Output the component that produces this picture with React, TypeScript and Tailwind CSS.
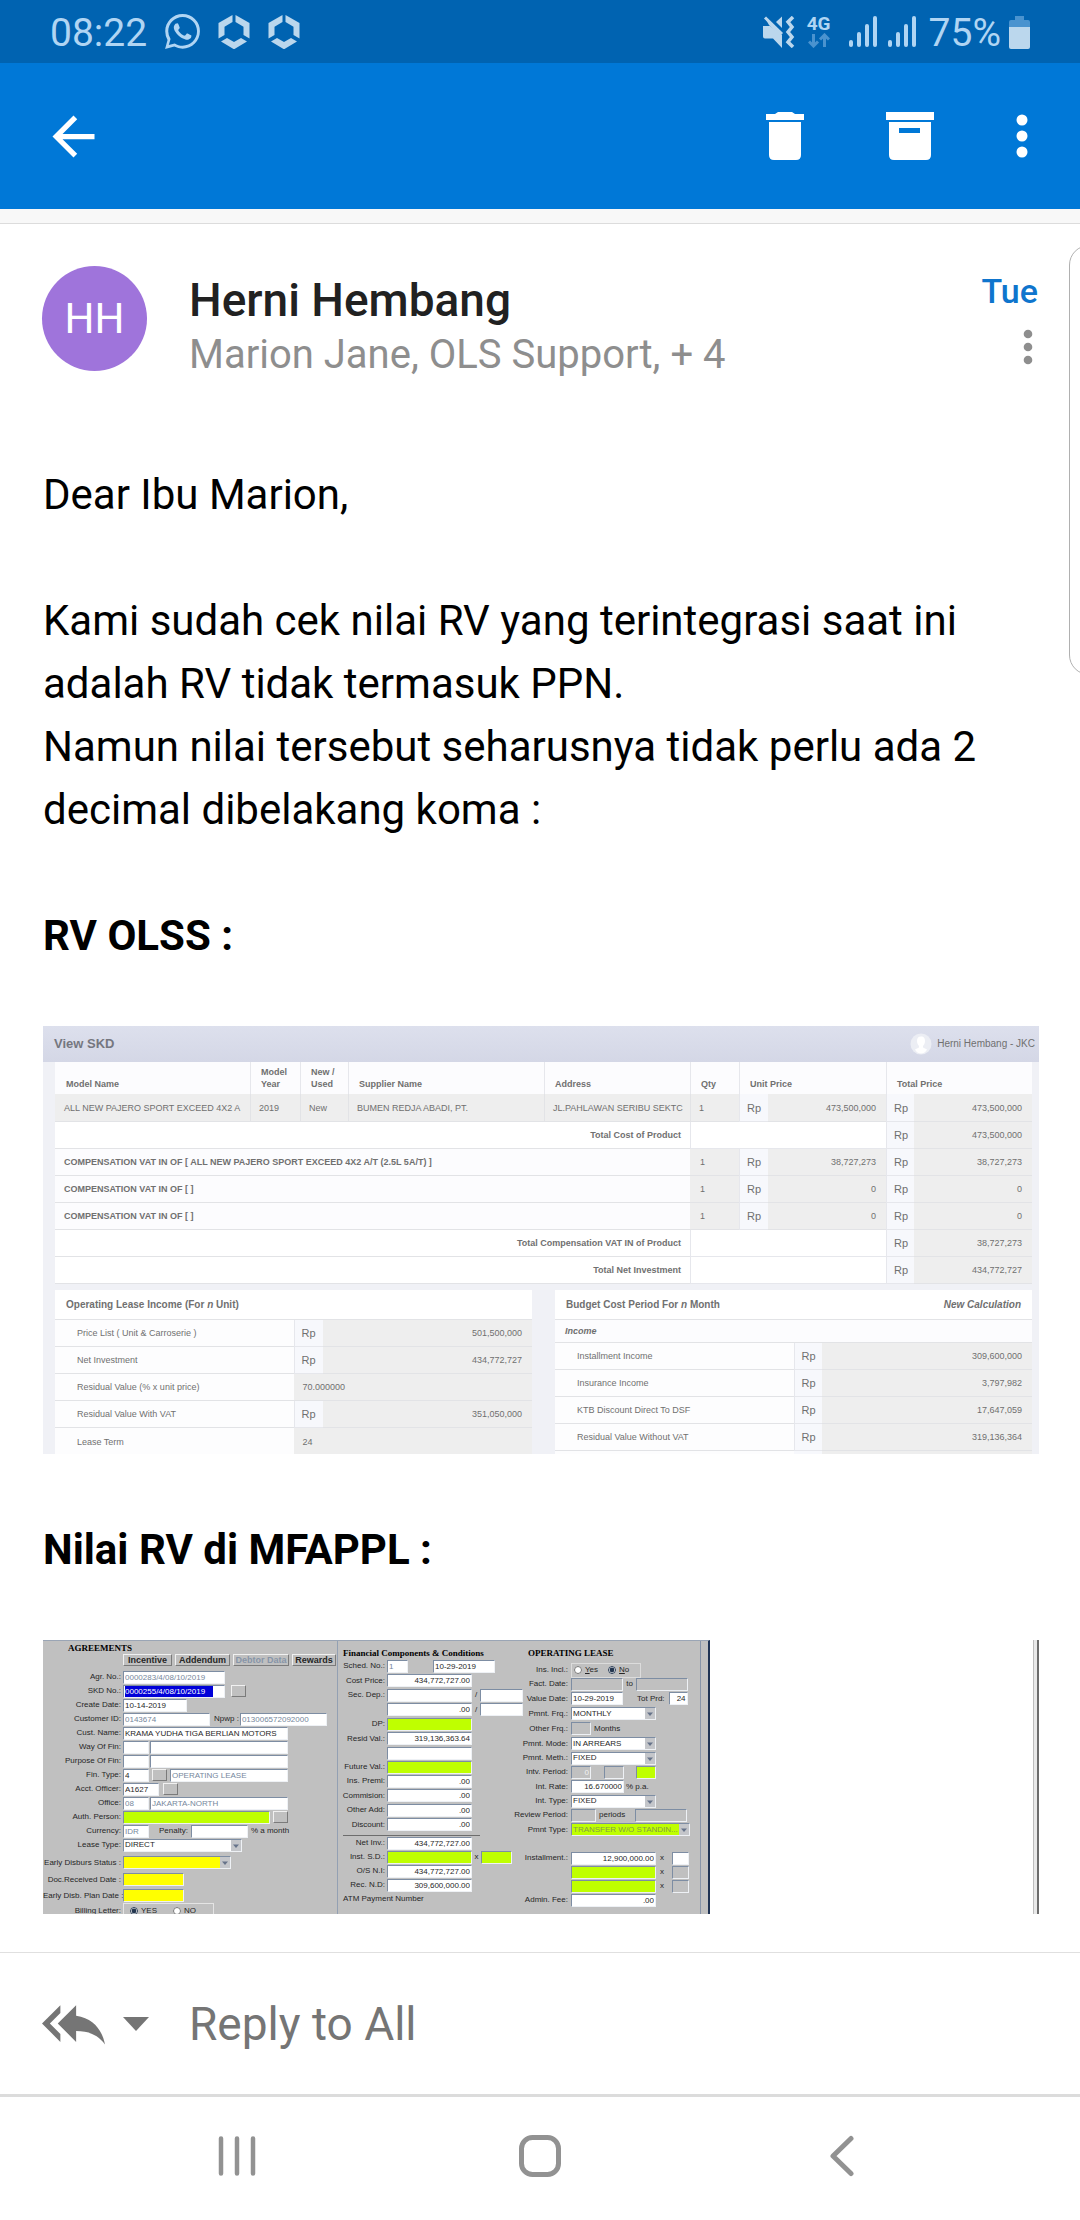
import React from "react";

/* ---------- shared icons ---------- */

function HexIcon() {
  return (
    <svg viewBox="0 0 32 34" className="h-[34px] w-8 fill-[#bbd7ed]" aria-hidden="true">
      <path d="M14.5 0v7L6.500 11.800V20L0.500 23.500V8z" />
      <path d="M17.500 0v7l8 4.800V20l6 3.500V8z" />
      <path d="M3 26.500l6-3.600 7 4.100 7-4.100 6 3.600L16 34.300z" />
    </svg>
  );
}

function WhatsAppIcon() {
  return (
    <svg viewBox="0 0 24 24" className="h-[35px] w-[35px] fill-[#b0d5f3]" aria-hidden="true">
      <path d="M.057 24l1.687-6.163A11.867 11.867 0 0 1 .157 11.892C.16 5.335 5.495 0 12.050 0a11.817 11.817 0 0 1 8.413 3.488 11.824 11.824 0 0 1 3.480 8.414c-.003 6.557-5.338 11.892-11.893 11.892a11.900 11.900 0 0 1-5.688-1.448zM6.700 20.200c1.676.995 3.276 1.591 5.392 1.592 5.448 0 9.886-4.434 9.889-9.885.002-5.462-4.415-9.890-9.881-9.892-5.452 0-9.887 4.434-9.889 9.884a9.860 9.860 0 0 0 1.600 5.260L2.600 21.300z" />
      <path d="M17.500 14.400c-.3-.15-1.760-.87-2.030-.97s-.47-.15-.67.15-.77.97-.94 1.160-.35.220-.65.080c-.3-.15-1.260-.46-2.400-1.480-.88-.79-1.480-1.760-1.650-2.060s-.02-.46.130-.61c.13-.13.300-.35.450-.52.150-.17.200-.3.300-.5s.05-.37-.03-.52-.67-1.610-.91-2.200c-.25-.58-.5-.5-.67-.5H7.860c-.2 0-.52.070-.79.370S6.030 7.820 6.030 9.280s1.060 2.870 1.210 3.070 2.100 3.200 5.080 4.490c.71.310 1.260.490 1.690.630.710.230 1.360.190 1.870.120.570-.090 1.760-.720 2.010-1.410s.25-1.290.17-1.410-.27-.2-.56-.37z" />
    </svg>
  );
}

function SignalIcon() {
  return (
    <svg viewBox="0 0 28 31" className="h-[31px] w-7 fill-[#b0d5f3]" aria-hidden="true">
      <rect x="0" y="24" width="4" height="7" rx="2" />
      <rect x="8" y="16" width="4" height="15" rx="2" />
      <rect x="16" y="8" width="4" height="23" rx="2" />
      <rect x="24" y="0" width="4" height="31" rx="2" />
    </svg>
  );
}

function StatusBar() {
  return (
    <div className="flex h-[63px] items-center justify-between bg-[#0063b1] pl-[50px] pr-[50px] text-[39px] leading-10 text-[#b0d5f3]">
      <div className="flex items-center gap-[18px]">
        <span className="pt-[2px]">08:22</span>
        <WhatsAppIcon />
        <HexIcon />
        <HexIcon />
      </div>
      <div className="flex items-center">
        <svg viewBox="0 0 32 32" className="h-8 w-8" aria-hidden="true">
          <path d="M0 10h7l12 10v12l-9-9.500H2q-2 0-2-2z" fill="#bbd7ed" />
          <path d="M2 2l17 17v4L6 9z" fill="#bbd7ed" />
          <path d="M2 1.500L19 18" stroke="#bbd7ed" strokeWidth="3" />
          <path d="M13 6l6-5.500V12z" fill="#bbd7ed" />
          <path d="M30 1l-5 5 4 5-4 5 4 5-4 5 5 5" fill="none" stroke="#bbd7ed" strokeWidth="3.500" />
        </svg>
        <div className="ml-3 flex w-6 flex-col items-center">
          <span className="text-[19px] font-bold leading-[18px]">4G</span>
          <svg viewBox="0 0 22 15" className="h-[15px] w-[22px]" fill="none" stroke="#4a93cf" strokeWidth="3" aria-hidden="true">
            <path d="M5.500 1v12M1 8.500l4.500 4.500L10 8.500M16.500 14V2M12 6.500L16.500 2 21 6.500" />
          </svg>
        </div>
        <div className="ml-[18px] flex gap-[11px]">
          <SignalIcon />
          <SignalIcon />
        </div>
        <span className="ml-[13px] pt-[2px]">75%</span>
        <svg viewBox="0 0 21 34" className="ml-2 h-[34px] w-[21px]" aria-hidden="true">
          <path d="M6 1h9v4h4q2 0 2 2v6H0V7q0-2 2-2h4z" fill="#4a93cf" />
          <path d="M0 12h21v20q0 2-2 2H2q-2 0-2-2z" fill="#bbd7ed" />
        </svg>
      </div>
    </div>
  );
}

function AppBar() {
  return (
    <div className="flex h-[146px] items-center justify-between bg-[#0078d7] pl-[42px] pr-[52px]">
      <button type="button" aria-label="Back">
        <svg viewBox="0 0 24 24" className="h-[63px] w-[63px] fill-white">
          <path d="M20 11H7.830l5.590-5.590L12 4l-8 8 8 8 1.410-1.410L7.830 13H20v-2z" />
        </svg>
      </button>
      <div className="flex items-center gap-[82px]">
        <button type="button" aria-label="Delete">
          <svg viewBox="0 0 38 48" className="h-12 w-[38px] fill-white">
            <path d="M0 2h9l3-2h14l3 2h9v6H0zM3 10h32v33q0 5-5 5H8q-5 0-5-5z" />
          </svg>
        </button>
        <button type="button" aria-label="Archive">
          <svg viewBox="0 0 48 48" className="h-12 w-12 fill-white">
            <path fillRule="evenodd" d="M0 0h48v8H0zM3 10h42v33q0 5-5 5H8q-5 0-5-5zM13 16v5h21v-5z" />
          </svg>
        </button>
        <button type="button" aria-label="More options">
          <svg viewBox="0 0 12 44" className="h-11 w-3 fill-white">
            <circle cx="6" cy="6" r="5.500" />
            <circle cx="6" cy="22" r="5.500" />
            <circle cx="6" cy="38" r="5.500" />
          </svg>
        </button>
      </div>
    </div>
  );
}

function MessageHeader() {
  return (
    <header className="flex pl-[42px] pr-[42px] pt-[42px]">
      <div className="flex h-[105px] w-[105px] shrink-0 items-center justify-center rounded-full bg-[#9f74db] text-[42px] text-white">HH</div>
      <div className="ml-[42px] flex-1 pt-2">
        <h1 className="text-[46px] font-medium leading-[52px] text-[#212121]">Herni Hembang</h1>
        <p className="mt-[5px] text-[40px] leading-[48px] text-[#8e8e8e]">Marion Jane, OLS Support, + 4</p>
      </div>
      <div className="flex flex-col items-end pt-[5px]">
        <span className="text-[34px] font-medium leading-10 text-[#0f75cd]">Tue</span>
        <button type="button" aria-label="Message options" className="mr-[5px] mt-[18px]">
          <svg viewBox="0 0 10 36" className="h-9 w-[10px] fill-[#8e8e8e]">
            <circle cx="5" cy="5" r="4.300" />
            <circle cx="5" cy="18" r="4.300" />
            <circle cx="5" cy="31" r="4.300" />
          </svg>
        </button>
      </div>
    </header>
  );
}

/* ---------- first attachment: View SKD ---------- */

const line = "border-b border-[#e2e3e6]";
const side = "border-l border-[#e6e7ec]";

function Rp() {
  return <td className={`${line} ${side} bg-[#f7f8fc] pl-[7px] text-[11px]`}>Rp</td>;
}

function Amount({ children }: { children: string }) {
  return <td className={`${line} bg-[#eeeeee] pr-[10px] text-right`}>{children}</td>;
}

function CompRow({ name, amount }: { name: string; amount: string }) {
  return (
    <tr className="h-[27px]">
      <td colSpan={5} className={`${line} bg-[#fcfcfe] pl-[9px] font-bold`}>{name}</td>
      <td className={`${line} bg-[#eeeeee] pl-[10px]`}>1</td>
      <Rp />
      <Amount>{amount}</Amount>
      <Rp />
      <Amount>{amount}</Amount>
    </tr>
  );
}

function TotalRow({ name, amount }: { name: string; amount: string }) {
  return (
    <tr className="h-[27px]">
      <td colSpan={5} className={`${line} bg-white pr-[9px] text-right font-bold`}>{name}</td>
      <td colSpan={3} className={`${line} ${side} bg-white`} />
      <Rp />
      <Amount>{amount}</Amount>
    </tr>
  );
}

function PanelRow({ name, amount }: { name: string; amount: string }) {
  return (
    <tr className="h-[27px]">
      <td className={`${line} bg-[#fdfdfe] pl-[22px]`}>{name}</td>
      <Rp />
      <Amount>{amount}</Amount>
    </tr>
  );
}

function SkdAttachment() {
  const cellHead = "border-l border-[#e6e7ec] bg-[#fcfcfe] pb-1 pl-[10px] text-left align-bottom font-bold first:border-l-0 first:pl-[11px]";
  const cell = `${line} whitespace-nowrap border-l border-l-[#e2e3e6] bg-[#eeeeee] pl-2`;
  return (
    <section aria-label="View SKD" className="h-[428px] overflow-hidden bg-[#f0f1f6] font-['Liberation_Sans',Arial,sans-serif] text-[9px] leading-3 text-[#707070]">
      <div className="flex h-9 items-center justify-between bg-linear-to-b from-[#dde0ed] to-[#d4d7e6] pl-[11px] pr-1">
        <h2 className="text-[13px] font-bold leading-4 text-[#75777f]">View SKD</h2>
        <div className="flex items-center gap-[5px] text-[10px]">
          <svg viewBox="0 0 22 22" className="h-[22px] w-[22px]" aria-hidden="true">
            <circle cx="11" cy="11" r="10.500" fill="#eceef4" />
            <path d="M11 3.500c3 0 4 2 4 4.500 0 2-1 4-2 5v1.500l4 2q-2 4-6 4t-6-4l4-2V13c-1-1-2-3-2-5 0-2.500 1-4.500 4-4.500z" fill="#fff" />
          </svg>
          Herni Hembang - JKC
        </div>
      </div>
      <div className="pl-3 pr-[7px]">
        <table className="w-full table-fixed border-separate border-spacing-0">
          <colgroup>
            <col className="w-[195px]" />
            <col className="w-[50px]" />
            <col className="w-[48px]" />
            <col className="w-[196px]" />
            <col className="w-[146px]" />
            <col className="w-[49px]" />
            <col className="w-[29px]" />
            <col className="w-[118px]" />
            <col className="w-[28px]" />
            <col className="w-[118px]" />
          </colgroup>
          <thead>
            <tr className="h-8">
              <th className={cellHead}>Model Name</th>
              <th className={cellHead}>Model<br />Year</th>
              <th className={cellHead}>New /<br />Used</th>
              <th className={cellHead}>Supplier Name</th>
              <th className={cellHead}>Address</th>
              <th className={cellHead}>Qty</th>
              <th colSpan={2} className={cellHead}>Unit Price</th>
              <th colSpan={2} className={cellHead}>Total Price</th>
            </tr>
          </thead>
          <tbody>
            <tr className="h-7">
              <td className={`${line} bg-[#eeeeee] pl-[9px] whitespace-nowrap`}>ALL NEW PAJERO SPORT EXCEED 4X2 A</td>
              <td className={cell}>2019</td>
              <td className={cell}>New</td>
              <td className={cell}>BUMEN REDJA ABADI, PT.</td>
              <td className={cell}>JL.PAHLAWAN SERIBU SEKTC</td>
              <td className={cell}>1</td>
              <Rp />
              <Amount>473,500,000</Amount>
              <Rp />
              <Amount>473,500,000</Amount>
            </tr>
            <TotalRow name="Total Cost of Product" amount="473,500,000" />
            <CompRow name="COMPENSATION VAT IN OF [ ALL NEW PAJERO SPORT EXCEED 4X2 A/T (2.5L 5A/T) ]" amount="38,727,273" />
            <CompRow name="COMPENSATION VAT IN OF [ ]" amount="0" />
            <CompRow name="COMPENSATION VAT IN OF [ ]" amount="0" />
            <TotalRow name="Total Compensation VAT IN of Product" amount="38,727,273" />
            <TotalRow name="Total Net Investment" amount="434,772,727" />
          </tbody>
        </table>
        <div className="mt-[6px] grid grid-cols-2 items-start gap-[23px]">
          <table className="w-full table-fixed border-separate border-spacing-0">
            <colgroup>
              <col className="w-1/2" />
              <col className="w-[29px]" />
              <col />
            </colgroup>
            <thead>
              <tr className="h-[30px]">
                <th colSpan={3} className={`${line} bg-white pl-[11px] text-left text-[10px] font-bold`}>
                  Operating Lease Income (For <i>n</i> Unit)
                </th>
              </tr>
            </thead>
            <tbody>
              <PanelRow name="Price List ( Unit & Carroserie )" amount="501,500,000" />
              <PanelRow name="Net Investment" amount="434,772,727" />
              <tr className="h-[27px]">
                <td className={`${line} bg-[#fdfdfe] pl-[22px]`}>Residual Value (% x unit price)</td>
                <td colSpan={2} className={`${line} bg-[#eeeeee] pl-[9px]`}>70.000000</td>
              </tr>
              <PanelRow name="Residual Value With VAT" amount="351,050,000" />
              <tr className="h-[27px]">
                <td className="bg-[#fdfdfe] pl-[22px]">Lease Term</td>
                <td colSpan={2} className="bg-[#eeeeee] pl-[9px]">24</td>
              </tr>
            </tbody>
          </table>
          <table className="w-full table-fixed border-separate border-spacing-0">
            <colgroup>
              <col className="w-1/2" />
              <col className="w-[28px]" />
              <col />
            </colgroup>
            <thead>
              <tr className="h-[30px]">
                <th colSpan={3} className={`${line} bg-white px-[11px] text-[10px] font-bold`}>
                  <div className="flex justify-between">
                    <span>Budget Cost Period For <i>n</i> Month</span>
                    <i>New Calculation</i>
                  </div>
                </th>
              </tr>
            </thead>
            <tbody>
              <tr className="h-[23px]">
                <td colSpan={3} className={`${line} bg-[#fcfcfe] pl-[10px] font-bold italic`}>Income</td>
              </tr>
              <PanelRow name="Installment Income" amount="309,600,000" />
              <PanelRow name="Insurance Income" amount="3,797,982" />
              <PanelRow name="KTB Discount Direct To DSF" amount="17,647,059" />
              <PanelRow name="Residual Value Without VAT" amount="319,136,364" />
              <tr className="h-[27px]">
                <td className="bg-[#fdfdfe]" />
                <td className="bg-[#f7f8fc]" />
                <td className="bg-[#eeeeee]" />
              </tr>
            </tbody>
          </table>
        </div>
      </div>
    </section>
  );
}

/* ---------- second attachment: agreement form ---------- */

const box = "h-[13px] min-w-0 shrink-0 rounded-none border border-[#7d8da3] border-b-[#eef1f5] border-r-[#eef1f5] px-px text-[8px] leading-[10px] outline-none";
const white = "bg-white text-[#1f1f1f]";
const dim = "bg-white text-[#76879c]";
const lime = "bg-[#bfff00] text-[#1f1f1f]";
const yellow = "bg-[#ffff00] text-[#1f1f1f]";
const gray = "bg-[#c0c0c0] text-[#f2f2f2]";

function Box({ id, label, value = "", look }: { id?: string; label?: string; value?: string; look: string }) {
  return <input id={id} aria-label={label} type="text" defaultValue={value} className={`${box} ${look}`} />;
}

function Lookup({ label }: { label: string }) {
  return (
    <button type="button" aria-label={label} className="h-3 w-[15px] shrink-0 border border-[#f1f1f1] border-b-[#7b7b7b] border-r-[#7b7b7b] bg-[#c0c0c0]" />
  );
}

function Pick({ id, value, look }: { id: string; value: string; look: string }) {
  return (
    <span className="relative inline-flex shrink-0">
      <select id={id} className={`${box} appearance-none ${look}`} defaultValue={value}>
        <option>{value}</option>
      </select>
      <svg viewBox="0 0 10 10" className="pointer-events-none absolute right-px top-px h-[11px] w-[10px] bg-[#c4c6ca]" aria-hidden="true">
        <path d="M2 4h6L5 7.500z" fill="#66738a" />
      </svg>
    </span>
  );
}

function Row({ id, label, tall, wide, children }: { id?: string; label: string; tall: string; wide: string; children?: React.ReactNode }) {
  return (
    <div className={`flex items-center ${tall}`}>
      <label htmlFor={id} className={`shrink-0 whitespace-nowrap text-right ${wide}`}>{label}</label>
      {children}
    </div>
  );
}

const r14 = "h-[14px]";
const r15 = "h-[15px]";

function AgreementColumn() {
  const w = "w-[78px] mr-[2px]";
  const tab = "h-3 border border-[#f1f1f1] border-b-[#7b7b7b] border-r-[#7b7b7b] text-[9px] font-bold leading-[9px]";
  return (
    <div className="w-[294px] shrink-0 pt-px">
      <h3 className="pl-[25px] font-['Liberation_Serif',serif] text-[9px] font-bold leading-3 text-black">AGREEMENTS</h3>
      <div className="flex gap-[3px] pl-[80px]">
        <button type="button" className={`${tab} w-[49px]`}>Incentive</button>
        <button type="button" className={`${tab} w-[55px]`}>Addendum</button>
        <button type="button" className={`${tab} w-[56px] text-[#8795a8]`}>Debtor Data</button>
        <button type="button" className={`${tab} w-[44px]`}>Rewards</button>
      </div>
      <div className="pt-1">
        <Row id="agr" label="Agr. No.:" tall={r14} wide={w}><Box id="agr" value="0000283/4/08/10/2019" look={`${dim} w-[102px]`} /></Row>
        <Row label="SKD No.:" tall={r14} wide={w}>
          <div className={`${box} ${white} mr-[6px] w-[102px]`}>
            <span className="inline-block bg-[#0000d8] pr-2 leading-[11px] text-white">0000255/4/08/10/2019</span>
          </div>
          <Lookup label="Find SKD" />
        </Row>
        <Row id="created" label="Create Date:" tall={r14} wide={w}><Box id="created" value="10-14-2019" look={`${white} w-[64px]`} /></Row>
        <Row id="cust" label="Customer ID:" tall={r14} wide={w}>
          <Box id="cust" value="0143674" look={`${dim} w-[87px] mr-1`} />
          <label htmlFor="npwp" className="mr-px">Npwp :</label>
          <Box id="npwp" value="013006572092000" look={`${dim} w-[87px]`} />
        </Row>
        <Row id="name" label="Cust. Name:" tall={r14} wide={w}><Box id="name" value="KRAMA YUDHA TIGA BERLIAN MOTORS" look={`${white} w-[165px]`} /></Row>
        <Row id="way" label="Way Of Fin:" tall={r14} wide={w}>
          <Box id="way" look={`${white} w-[26px] mr-px`} />
          <Box label="Way of financing" look={`${white} w-[138px]`} />
        </Row>
        <Row id="purpose" label="Purpose Of Fin:" tall={r14} wide={w}>
          <Box id="purpose" look={`${white} w-[26px] mr-px`} />
          <Box label="Purpose of financing" look={`${white} w-[138px]`} />
        </Row>
        <Row id="fin" label="Fin. Type:" tall={r14} wide={w}>
          <Box id="fin" value="4" look={`${white} w-[26px] mr-[3px]`} />
          <Lookup label="Find type" />
          <Box label="Financing type" value="OPERATING LEASE" look={`${dim} w-[118px] ml-[3px]`} />
        </Row>
        <Row id="acct" label="Acct. Officer:" tall={r14} wide={w}>
          <Box id="acct" value="A1627" look={`${white} w-[36px] mr-1`} />
          <Lookup label="Find officer" />
        </Row>
        <Row id="office" label="Office:" tall={r14} wide={w}>
          <Box id="office" value="08" look={`${dim} w-[26px] mr-px`} />
          <Box label="Office name" value="JAKARTA-NORTH" look={`${dim} w-[138px]`} />
        </Row>
        <Row id="auth" label="Auth. Person:" tall={r14} wide={w}>
          <Box id="auth" look={`${lime} w-[147px] mr-[3px]`} />
          <Lookup label="Find person" />
        </Row>
        <Row id="cur" label="Currency:" tall={r14} wide={w}>
          <Box id="cur" value="IDR" look={`${dim} w-[26px] mr-[10px]`} />
          <label htmlFor="penalty" className="mr-[3px]">Penalty:</label>
          <Box id="penalty" look={`${white} w-[57px] mr-[3px]`} />
          <span>% a month</span>
        </Row>
        <Row id="lease" label="Lease Type:" tall={r14} wide={w}><Pick id="lease" value="DIRECT" look={`${white} w-[119px]`} /></Row>
      </div>
      <div className="pt-[2px]">
        <Row id="early" label="Early Disburs Status :" tall="h-[17px]" wide={w}><Pick id="early" value="" look={`${yellow} w-[108px]`} /></Row>
        <Row id="doc" label="Doc.Received Date :" tall="h-[17px]" wide={w}><Box id="doc" look={`${yellow} w-[61px]`} /></Row>
        <Row id="plan" label="Early Disb. Plan Date :" tall="h-[15px]" wide={w}><Box id="plan" look={`${yellow} w-[61px]`} /></Row>
        <Row label="Billing Letter:" tall="h-[15px]" wide={w}>
          <div className="flex h-[15px] w-[91px] items-center gap-4 border border-[#e4e4e4] pl-[6px]">
            <label className="flex items-center gap-[3px]"><input type="radio" name="billing" defaultChecked className="h-[8px] w-[8px] accent-[#24364f]" />YES</label>
            <label className="flex items-center gap-[3px]"><input type="radio" name="billing" className="h-[8px] w-[8px]" />NO</label>
          </div>
        </Row>
      </div>
    </div>
  );
}

function FinanceColumn() {
  const w = "w-[47px] mr-[2px]";
  const num = "w-[85px] text-right";
  return (
    <div className="w-[175px] shrink-0 border-l border-[#93a0b3] pt-[6px]">
      <h3 className="whitespace-nowrap pl-[5px] font-['Liberation_Serif',serif] text-[9px] font-bold leading-3 text-black">Financial Components &amp; Conditions</h3>
      <Row id="sched" label="Sched. No.:" tall={r14} wide={w}>
        <Box id="sched" value="1" look={`${dim} w-[21px] mr-[25px]`} />
        <Box label="Schedule date" value="10-29-2019" look={`${white} w-[62px]`} />
      </Row>
      <Row id="cost" label="Cost Price:" tall={r15} wide={w}><Box id="cost" value="434,772,727.00" look={`${white} ${num}`} /></Row>
      <Row id="sec" label="Sec. Dep.:" tall={r14} wide={w}>
        <Box id="sec" look={`${white} ${num}`} />
        <span className="w-[8px] shrink-0 text-center">/</span>
        <Box label="Security deposit months" look={`${white} w-[43px]`} />
      </Row>
      <Row label="" tall={r15} wide={w}>
        <Box label="Security deposit" value=".00" look={`${white} ${num}`} />
        <span className="w-[8px] shrink-0 text-center">/</span>
        <Box label="Security deposit term" look={`${white} w-[43px]`} />
      </Row>
      <Row id="dp" label="DP:" tall={r14} wide={w}><Box id="dp" look={`${lime} ${num}`} /></Row>
      <Row id="resid" label="Resid Val.:" tall={r15} wide={w}><Box id="resid" value="319,136,363.64" look={`${white} ${num}`} /></Row>
      <Row label="" tall={r14} wide={w}><Box label="Residual value" look={`${white} ${num}`} /></Row>
      <Row id="future" label="Future Val.:" tall={r14} wide={w}><Box id="future" look={`${lime} ${num}`} /></Row>
      <Row id="premi" label="Ins. Premi:" tall={r14} wide={w}><Box id="premi" value=".00" look={`${white} ${num}`} /></Row>
      <Row id="comm" label="Commision:" tall={r15} wide={w}><Box id="comm" value=".00" look={`${white} ${num}`} /></Row>
      <Row id="other" label="Other Add:" tall={r14} wide={w}><Box id="other" value=".00" look={`${white} ${num}`} /></Row>
      <Row id="disc" label="Discount:" tall={r15} wide={w}><Box id="disc" value=".00" look={`${white} ${num}`} /></Row>
      <div className="ml-[5px] mr-[32px] mt-[3px] border-t border-[#6d6d6d]" />
      <Row id="net" label="Net Inv.:" tall={r14} wide={w}><Box id="net" value="434,772,727.00" look={`${white} ${num}`} /></Row>
      <Row id="inst" label="Inst. S.D.:" tall={r14} wide={w}>
        <Box id="inst" look={`${lime} ${num}`} />
        <span className="w-[9px] shrink-0 text-center">x</span>
        <Box label="Installment count" look={`${lime} w-[31px]`} />
      </Row>
      <Row id="osni" label="O/S N.I:" tall={r14} wide={w}><Box id="osni" value="434,772,727.00" look={`${white} ${num}`} /></Row>
      <Row id="recnd" label="Rec. N.D:" tall={r14} wide={w}><Box id="recnd" value="309,600,000.00" look={`${white} ${num}`} /></Row>
      <p className="pl-[5px] leading-[14px]">ATM Payment Number</p>
    </div>
  );
}

function LeaseColumn() {
  const w = "w-[56px] mr-[3px]";
  return (
    <div className="min-w-0 flex-1 pt-[6px]">
      <h3 className="whitespace-nowrap pl-[16px] font-['Liberation_Serif',serif] text-[9px] font-bold leading-3 text-black">OPERATING LEASE</h3>
      <div className="pt-1">
        <Row label="Ins. Incl.:" tall={r14} wide={w}>
          <div className="flex h-[15px] w-[70px] shrink-0 items-center gap-[10px] border border-[#dcdcdc] pl-[2px]">
            <label className="flex items-center gap-[3px]"><input type="radio" name="insurance" className="h-[8px] w-[8px]" /><span><u>Y</u>es</span></label>
            <label className="flex items-center gap-[3px]"><input type="radio" name="insurance" defaultChecked className="h-[8px] w-[8px] accent-[#24364f]" /><span><u>N</u>o</span></label>
          </div>
        </Row>
        <Row id="fact" label="Fact. Date:" tall={r14} wide={w}>
          <Box id="fact" look={`${gray} w-[52px]`} />
          <span className="w-[13px] shrink-0 text-center">to</span>
          <Box label="Factoring end date" look={`${gray} w-[52px]`} />
        </Row>
        <Row id="vdate" label="Value Date:" tall={r15} wide={w}>
          <Box id="vdate" value="10-29-2019" look={`${white} w-[52px]`} />
          <label htmlFor="prd" className="ml-[14px] mr-[4px]">Tot Prd:</label>
          <Box id="prd" value="24" look={`${white} w-[19px] text-right`} />
        </Row>
        <Row id="frq" label="Pmnt. Frq.:" tall={r15} wide={w}><Pick id="frq" value="MONTHLY" look={`${white} w-[85px]`} /></Row>
        <Row id="ofrq" label="Other Frq.:" tall={r15} wide={w}>
          <Box id="ofrq" look={`${gray} w-[20px] mr-[3px]`} />
          <span>Months</span>
        </Row>
        <Row id="mode" label="Pmnt. Mode:" tall={r15} wide={w}><Pick id="mode" value="IN ARREARS" look={`${white} w-[85px]`} /></Row>
        <Row id="meth" label="Pmnt. Meth.:" tall={r14} wide={w}><Pick id="meth" value="FIXED" look={`${white} w-[85px]`} /></Row>
        <Row id="intv" label="Intv. Period:" tall={r14} wide={w}>
          <Box id="intv" value="0" look={`${gray} w-[20px] mr-[13px] text-right`} />
          <Box label="Interval unit" look={`${gray} w-[20px] mr-[12px]`} />
          <Box label="Interval count" look={`${lime} w-[20px]`} />
        </Row>
        <Row id="rate" label="Int. Rate:" tall={r15} wide={w}>
          <Box id="rate" value="16.670000" look={`${white} w-[53px] mr-[2px] text-right`} />
          <span>% p.a.</span>
        </Row>
        <Row id="itype" label="Int. Type:" tall={r14} wide={w}><Pick id="itype" value="FIXED" look={`${white} w-[85px]`} /></Row>
        <Row id="review" label="Review Period:" tall={r14} wide={w}>
          <Box id="review" look={`${gray} w-[25px] mr-[3px]`} />
          <span className="mr-[10px]">periods</span>
          <Box label="Review unit" look={`${gray} w-[52px]`} />
        </Row>
        <Row id="ptype" label="Pmnt Type:" tall={r15} wide={w}><Pick id="ptype" value="TRANSFER W/O STANDIN..." look="w-[119px] bg-[#bfff00] text-[#7f9b4a]" /></Row>
      </div>
      <div className="pt-[14px]">
        <Row id="install" label="Installment.:" tall={r14} wide={w}>
          <Box id="install" value="12,900,000.00" look={`${white} w-[85px] text-right`} />
          <span className="w-[16px] shrink-0 pr-1 text-center">x</span>
          <Box label="Installment months" look={`${white} w-[17px]`} />
        </Row>
        <Row label="" tall={r14} wide={w}>
          <Box label="Second installment" look={`${lime} w-[85px]`} />
          <span className="w-[16px] shrink-0 pr-1 text-center">x</span>
          <Box label="Second installment months" look={`${gray} w-[17px]`} />
        </Row>
        <Row label="" tall={r14} wide={w}>
          <Box label="Third installment" look={`${lime} w-[85px]`} />
          <span className="w-[16px] shrink-0 pr-1 text-center">x</span>
          <Box label="Third installment months" look={`${gray} w-[17px]`} />
        </Row>
        <Row id="admin" label="Admin. Fee:" tall={r14} wide={w}><Box id="admin" value=".00" look={`${white} w-[85px] text-right`} /></Row>
      </div>
    </div>
  );
}

function FormAttachment() {
  return (
    <section aria-label="Agreement form" className="flex h-[274px] justify-between overflow-hidden font-['Liberation_Sans',Arial,sans-serif] text-[8px] leading-[10px] text-[#262626]">
      <form className="flex w-[67%] min-w-[666px] border-r-2 border-t border-r-[#1f3354] border-t-[#9aa5b5] bg-[#c0c0c0]">
        <AgreementColumn />
        <FinanceColumn />
        <LeaseColumn />
        <div className="w-[8px] shrink-0 border-l border-[#8794a8]" />
      </form>
      <div className="w-[6px] border-l border-r-2 border-l-[#bdbdbd] border-r-[#6c6c6c] bg-[#e9e9e9]" />
    </section>
  );
}

/* ---------- bottom bars ---------- */

function ReplyBar() {
  return (
    <div className="flex h-[142px] items-center border-t border-[#e0e0e0] pl-[42px] text-[#757575]">
      <button type="button" aria-label="Reply options" className="flex items-center">
        <svg viewBox="0 0 24 24" className="h-[63px] w-[63px] fill-[#757575]">
          <path d="M7 8V5l-7 7 7 7v-3l-4-4 4-4zm6 1V5l-7 7 7 7v-4.100c5 0 8.500 1.600 11 5.100-1-5-4-10-11-11z" />
        </svg>
        <svg viewBox="0 0 26 14" className="ml-[18px] h-[14px] w-[26px] fill-[#757575]">
          <path d="M0 0h26L13 14z" />
        </svg>
      </button>
      <button type="button" className="ml-[40px] text-[46px] leading-[56px]">Reply to All</button>
    </div>
  );
}

function NavBar() {
  return (
    <nav className="grid h-[126px] grid-cols-3 place-items-center border-t-[3px] border-[#dcdcdc] px-[86px] pb-[5px]">
      <button type="button" aria-label="Recent apps">
        <svg viewBox="0 0 42 42" className="h-[42px] w-[42px]" stroke="#929292" strokeWidth="4.500" strokeLinecap="round">
          <path d="M5 3.500v35M21 3.500v35M37 3.500v35" />
        </svg>
      </button>
      <button type="button" aria-label="Home">
        <svg viewBox="0 0 42 42" className="h-[42px] w-[42px]" fill="none" stroke="#929292" strokeWidth="5">
          <rect x="2.500" y="2.500" width="37" height="37" rx="11" />
        </svg>
      </button>
      <button type="button" aria-label="Back">
        <svg viewBox="0 0 42 42" className="h-[42px] w-[42px]" fill="none" stroke="#929292" strokeWidth="5" strokeLinecap="round" strokeLinejoin="round">
          <path d="M29 3.500L11 21l18 17.500" />
        </svg>
      </button>
    </nav>
  );
}

export default function App() {
  return (
    <div className="flex min-h-screen flex-col overflow-hidden bg-white font-[Roboto,sans-serif] text-black">
      <StatusBar />
      <AppBar />
      <div className="h-[15px] border-b border-[#dcdcdc] bg-[#f8f8f8]" />
      <main className="relative flex-1">
        <div className="absolute right-0 top-[21px] h-[430px] w-[11px] overflow-hidden">
          <div className="h-full w-14 rounded-[20px] border border-[#b0b0b0]" />
        </div>
        <MessageHeader />
        <article className="pb-[38px] pl-[43px] pr-[41px] pt-[84px] text-[42px] leading-[63px]">
          <p>Dear Ibu Marion,</p>
          <p className="mt-[63px]">
            Kami sudah cek nilai RV yang terintegrasi saat ini adalah RV tidak termasuk PPN.
            <br />
            Namun nilai tersebut seharusnya tidak perlu ada 2 decimal dibelakang koma :
          </p>
          <p className="mb-[59px] mt-[63px] font-bold">RV OLSS :</p>
          <SkdAttachment />
          <p className="mb-[59px] mt-[64px] font-bold">Nilai RV di MFAPPL :</p>
          <FormAttachment />
        </article>
      </main>
      <ReplyBar />
      <NavBar />
    </div>
  );
}
